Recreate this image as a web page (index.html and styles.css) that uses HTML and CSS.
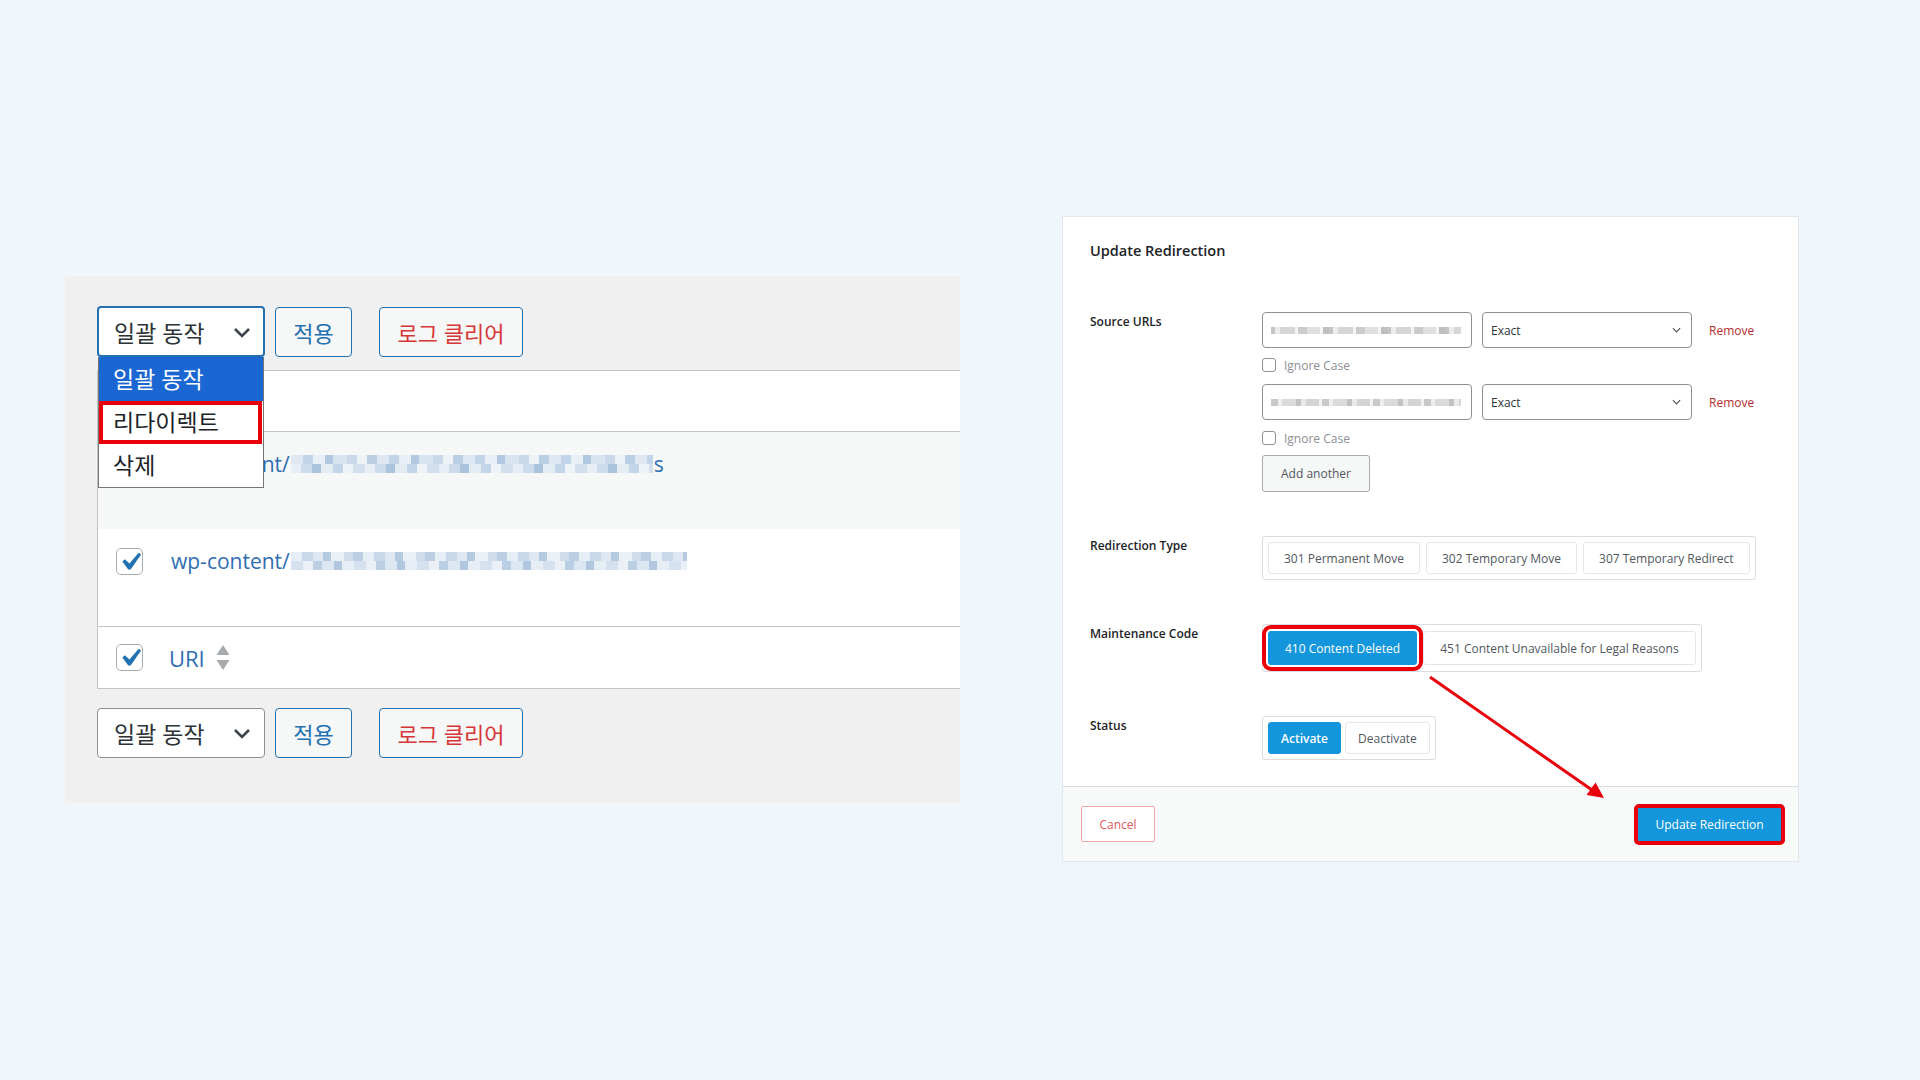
FILE: index.html
```html
<!DOCTYPE html>
<html lang="ko">
<head>
<meta charset="utf-8">
<title>Redirection</title>
<link rel="stylesheet" href="styles.css">
</head>
<body>
<div class="stage">
  <section class="wp-panel">
    <div class="tablenav">
      <div class="bulk">
        <div class="select focused"><span>일괄 동작</span>
          <svg class="chev" viewBox="0 0 20 20" width="20" height="20"><path d="M3 7l7 7 7-7" fill="none" stroke="#3c434a" stroke-width="2.6"/></svg>
        </div>
        <ul class="dropdown">
          <li class="hl">일괄 동작</li>
          <li class="marked">리다이렉트</li>
          <li>삭제</li>
        </ul>
      </div>
      <button class="btn">적용</button>
      <button class="btn danger">로그 클리어</button>
    </div>

    <div class="list">
      <div class="row-head"></div>
      <div class="row alt">
        <span class="cb checked"><svg viewBox="0 0 20 20"><path d="M14.83 4.89l1.34.94-5.81 8.38H9.02L5.78 9.67l1.34-1.25 2.57 2.4z" fill="#2271b1"/></svg></span>
        <span class="link">wp-content/<span class="blur blur-a"></span>s</span>
      </div>
      <div class="row">
        <span class="cb checked"><svg viewBox="0 0 20 20"><path d="M14.83 4.89l1.34.94-5.81 8.38H9.02L5.78 9.67l1.34-1.25 2.57 2.4z" fill="#2271b1"/></svg></span>
        <span class="link">wp-content/<span class="blur blur-b"></span></span>
      </div>
      <div class="row-foot">
        <span class="cb checked"><svg viewBox="0 0 20 20"><path d="M14.83 4.89l1.34.94-5.81 8.38H9.02L5.78 9.67l1.34-1.25 2.57 2.4z" fill="#2271b1"/></svg></span>
        <span class="col-uri">URI</span>
        <svg class="sort" viewBox="0 0 14 26" width="14" height="26"><path d="M7 0l6.5 10H0.5z" fill="#a7aaad"/><path d="M0.5 15h13L7 25z" fill="#a7aaad"/></svg>
      </div>
    </div>

    <div class="tablenav bottom">
      <div class="bulk">
        <div class="select"><span>일괄 동작</span>
          <svg class="chev" viewBox="0 0 20 20" width="20" height="20"><path d="M3 7l7 7 7-7" fill="none" stroke="#3c434a" stroke-width="2.6"/></svg>
        </div>
      </div>
      <button class="btn">적용</button>
      <button class="btn danger">로그 클리어</button>
    </div>
  </section>

  <section class="modal">
    <div class="modal-body">
      <h2>Update Redirection</h2>
      <div class="form">
        <div class="field">
          <div class="lbl">Source URLs</div>
          <div class="ctrl">
            <div class="url-row">
              <div class="url-input"><span class="gblur gblur-a"></span></div>
              <div class="url-select"><span>Exact</span><svg viewBox="0 0 10 6" width="9" height="6"><path d="M1 1l4 4 4-4" fill="none" stroke="#50575e" stroke-width="1.3"/></svg></div>
              <a class="remove">Remove</a>
            </div>
            <div class="ignore"><span class="small-cb"></span>Ignore Case</div>
            <div class="url-row second">
              <div class="url-input"><span class="gblur gblur-b"></span></div>
              <div class="url-select"><span>Exact</span><svg viewBox="0 0 10 6" width="9" height="6"><path d="M1 1l4 4 4-4" fill="none" stroke="#50575e" stroke-width="1.3"/></svg></div>
              <a class="remove">Remove</a>
            </div>
            <div class="ignore second"><span class="small-cb"></span>Ignore Case</div>
            <button class="add-another">Add another</button>
          </div>
        </div>

        <div class="field">
          <div class="lbl">Redirection Type</div>
          <div class="ctrl">
            <div class="seg">
              <button class="opt">301 Permanent Move</button>
              <button class="opt">302 Temporary Move</button>
              <button class="opt">307 Temporary Redirect</button>
            </div>
          </div>
        </div>

        <div class="field">
          <div class="lbl">Maintenance Code</div>
          <div class="ctrl">
            <div class="seg tall">
              <button class="opt active flagged">410 Content Deleted</button>
              <button class="opt">451 Content Unavailable for Legal Reasons</button>
            </div>
          </div>
        </div>

        <div class="field status">
          <div class="lbl">Status</div>
          <div class="ctrl">
            <div class="seg compact">
              <button class="opt active bold">Activate</button>
              <button class="opt">Deactivate</button>
            </div>
          </div>
        </div>
      </div>
    </div>
    <div class="modal-footer">
      <button class="cancel">Cancel</button>
      <button class="primary flagged-tight">Update Redirection</button>
    </div>
  </section>
</div>

<svg class="annot" viewBox="0 0 1920 1080" width="1920" height="1080">
  <line x1="1430" y1="677" x2="1592" y2="790" stroke="#e8000b" stroke-width="3"/>
  <polygon points="1604,798 1586.5,795 1595.5,782.5" fill="#e8000b"/>
</svg>
</body>
</html>
```

FILE: styles.css
```css
html, body {
  margin: 0;
  padding: 0;
}
body {
  width: 1920px;
  height: 1080px;
  overflow: hidden;
  background: #eff7fd;
  font-family: "Open Sans", "Noto Sans CJK KR", sans-serif;
  position: relative;
}
button {
  font-family: inherit;
  cursor: pointer;
}

.stage {
  display: flex;
  align-items: flex-start;
}

/* ---------- Left: WP list table ---------- */
.wp-panel {
  margin: 276px 0 0 65px;
  width: 895px;
  height: 527px;
  box-sizing: border-box;
  padding: 30px 0 0 32px;
  background: #f0f0f1;
}
.tablenav {
  display: flex;
  align-items: center;
  height: 51px;
}
.tablenav.bottom {
  margin-top: 19px;
  height: 50px;
}
.bulk {
  position: relative;
  width: 168px;
  height: 51px;
}
.tablenav.bottom .bulk {
  height: 50px;
}
.select {
  box-sizing: border-box;
  width: 168px;
  height: 100%;
  background: #fff;
  border: 1px solid #8c8f94;
  border-radius: 4px;
  display: flex;
  align-items: center;
  justify-content: space-between;
  padding: 0 12px 0 16px;
  font-size: 23px;
  color: #2c3338;
}
.select.focused {
  border: 2px solid #2271b1;
  padding-left: 15px;
  padding-right: 11px;
}
.chev {
  display: block;
}
.btn {
  box-sizing: border-box;
  margin-left: 10px;
  height: 50px;
  width: 77px;
  padding: 0;
  border: 1px solid #2271b1;
  border-radius: 4px;
  background: #f6f7f7;
  color: #2271b1;
  font-size: 22px;
}
.btn.danger {
  margin-left: 27px;
  width: 144px;
  color: #d63638;
}

.dropdown {
  position: absolute;
  z-index: 5;
  left: 1px;
  top: 51px;
  width: 166px;
  margin: 0;
  padding: 0;
  list-style: none;
  box-sizing: border-box;
  border: 1px solid #767676;
  border-top: 0;
  background: #fff;
  font-size: 23px;
  color: #1d2327;
}
.dropdown li {
  height: 43px;
  line-height: 43px;
  padding-left: 14px;
}
.dropdown li.hl {
  height: 44px;
  line-height: 44px;
  background: #1a66d2;
  color: #fff;
}
.dropdown li.marked {
  box-shadow: inset 0 0 0 4px #e8000b;
  margin-right: 1px;
}

.list {
  margin-top: 13px;
  border: 1px solid #c3c4c7;
  border-right: 0;
  background: #fff;
}
.row-head {
  height: 60px;
  border-bottom: 1px solid #c3c4c7;
}
.row {
  height: 97px;
  box-sizing: border-box;
  padding: 18px 0 0 18px;
  display: flex;
  align-items: flex-start;
}
.row.alt {
  background: #f6f7f7;
}
.row-foot {
  height: 61px;
  border-top: 1px solid #c3c4c7;
  display: flex;
  align-items: center;
  padding-left: 18px;
}
.cb {
  flex: none;
  box-sizing: border-box;
  width: 27px;
  height: 27px;
  border: 1px solid #a7aaad;
  border-radius: 5px;
  background: #fff;
  margin-right: 26px;
  display: flex;
  align-items: center;
  justify-content: center;
  overflow: visible;
}
.cb svg {
  width: 36px;
  height: 36px;
  flex: none;
}
.row .cb {
  margin-top: 1px;
}
.link {
  font-size: 21px;
  line-height: 28px;
  color: #2f6db3;
  white-space: nowrap;
  display: flex;
  align-items: center;
  margin-left: 2px;
}
.col-uri {
  font-size: 22px;
  color: #2f6db3;
}
.sort {
  margin-left: 11px;
  display: block;
}
.blur {
  display: inline-block;
  height: 18px;
  margin: 0 1px;
}
.blur-a {
  width: 362px;
  background:
    repeating-linear-gradient(90deg, #dfe8f2 0 12px, #c2d4e7 12px 22px, #e9eff6 22px 34px, #b1c8e0 34px 42px, #d8e4f0 42px 56px, #c9d9ea 56px 66px, #edf2f7 66px 76px, #bacfe4 76px 86px) top / 100% 50% no-repeat,
    repeating-linear-gradient(90deg, #e8eef5 0 10px, #cddcec 10px 21px, #abc4de 21px 30px, #e3ebf3 30px 42px, #c3d5e8 42px 52px, #eef3f8 52px 62px, #d2dfed 62px 74px) bottom / 100% 50% no-repeat;
}
.blur-b {
  width: 396px;
  background:
    repeating-linear-gradient(90deg, #e5edf5 0 11px, #c7d8ea 11px 22px, #dfe8f2 22px 32px, #b3cae1 32px 40px, #ebf0f6 40px 53px, #cfdcec 53px 62px, #bccfe4 62px 72px) top / 100% 50% no-repeat,
    repeating-linear-gradient(90deg, #d5e1ee 0 12px, #ebf0f6 12px 22px, #bacee4 22px 31px, #dde7f1 31px 43px, #b0c7df 43px 51px, #e6edf5 51px 63px) bottom / 100% 50% no-repeat;
}

/* ---------- Right: modal ---------- */
.modal {
  margin: 217px 0 0 103px;
  width: 735px;
  height: 644px;
  background: #fff;
  box-shadow: 0 0 0 1px #e3e7eb;
  display: flex;
  flex-direction: column;
  color: #1d2327;
}
.modal-body {
  flex: 1;
  padding: 24px 27px 0;
}
.modal h2 {
  margin: 0;
  font-size: 14.5px;
  line-height: 20px;
  font-weight: 600;
  color: #1d2327;
}
.form {
  margin-top: 51px;
}
.field {
  display: grid;
  grid-template-columns: 172px 1fr;
}
.field + .field {
  margin-top: 44px;
}
.lbl {
  font-size: 12px;
  font-weight: 600;
  line-height: 16px;
  padding-top: 2px;
}
.url-row {
  display: flex;
  align-items: center;
}
.url-row.second {
  margin-top: 11px;
}
.url-input, .url-select {
  box-sizing: border-box;
  width: 210px;
  height: 36px;
  border: 1px solid #8c8f94;
  border-radius: 4px;
  display: flex;
  align-items: center;
  background: #fff;
}
.url-input {
  padding: 0 5px 0 8px;
}
.url-select {
  margin-left: 10px;
  justify-content: space-between;
  padding: 0 10px 0 8px;
  font-size: 12px;
  color: #2c3338;
}
.url-select svg {
  display: block;
}
.remove {
  margin-left: 17px;
  font-size: 12px;
  color: #b32d2e;
}
.gblur {
  display: block;
  height: 7px;
  width: 190px;
}
.gblur-a {
  background: repeating-linear-gradient(90deg, #c4c4c4 0 4px, #ececec 4px 9px, #d6d6d6 9px 24px, #f3f3f3 24px 27px, #cbcbcb 27px 36px, #e0e0e0 36px 49px, #f4f4f4 49px 52px, #bfbfbf 52px 58px);
}
.gblur-b {
  background: repeating-linear-gradient(90deg, #c9c9c9 0 7px, #eeeeee 7px 11px, #dadada 11px 25px, #c2c2c2 25px 30px, #e9e9e9 30px 35px, #d4d4d4 35px 48px, #f2f2f2 48px 51px);
}
.ignore {
  margin-top: 9px;
  height: 16px;
  display: flex;
  align-items: center;
  font-size: 12px;
  color: #8c8f94;
}
.ignore.second {
  margin-top: 10px;
}
.small-cb {
  box-sizing: border-box;
  width: 14px;
  height: 14px;
  border: 1px solid #8c8f94;
  border-radius: 3px;
  margin-right: 8px;
  background: #fff;
}
.add-another {
  margin-top: 9px;
  box-sizing: border-box;
  width: 108px;
  height: 37px;
  border: 1px solid #a7aaad;
  border-radius: 3px;
  background: #f6f7f7;
  color: #50575e;
  font-size: 12px;
  padding: 0;
}
.seg {
  display: inline-flex;
  gap: 6px;
  padding: 5px;
  border: 1px solid #dcdcde;
  border-radius: 3px;
}
.seg .opt {
  height: 32px;
  padding: 0 15px;
  border: 1px solid #e4e6e8;
  border-radius: 3px;
  background: #fff;
  color: #50575e;
  font-size: 12px;
  white-space: nowrap;
}
.seg.tall {
  padding: 6px 5px;
}
.seg.tall .opt {
  height: 34px;
  padding: 0 16px;
}
.seg.compact {
  gap: 4px;
}
.seg.compact .opt {
  padding: 0 12px;
}
.seg .opt.active {
  background: #1396db;
  border-color: #1396db;
  color: #fff;
}
.seg .opt.bold {
  font-weight: 600;
}
.flagged {
  outline: 4px solid #e8000b;
  outline-offset: 2px;
}
.modal-footer {
  height: 74px;
  border-top: 1px solid #dcdcde;
  background: #f8f9f9;
  display: flex;
  align-items: center;
  justify-content: space-between;
  padding: 0 16px 0 18px;
}
.cancel {
  box-sizing: border-box;
  width: 74px;
  height: 36px;
  border: 1px solid #eaa8a9;
  border-radius: 2px;
  background: #fff;
  color: #e0595b;
  font-size: 12px;
  padding: 0;
}
.primary {
  box-sizing: border-box;
  width: 145px;
  height: 35px;
  border: 0;
  border-radius: 2px;
  background: #1396db;
  color: #fff;
  font-size: 12px;
  padding: 0;
}
.flagged-tight {
  outline: 4px solid #e8000b;
  outline-offset: -1px;
}

.annot {
  position: absolute;
  left: 0;
  top: 0;
  pointer-events: none;
}
```
